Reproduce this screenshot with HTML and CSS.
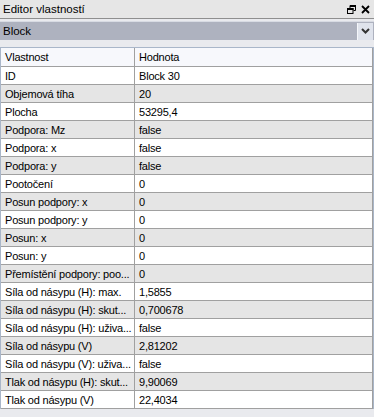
FILE: index.html
```html
<!DOCTYPE html>
<html>
<head>
<meta charset="utf-8">
<link rel="stylesheet" href="styles.css">
</head>
<body>
<div class="panel">
  <div class="titlebar">
    <span class="title">Editor vlastností</span>
    <span class="tools">
      <svg class="ico" width="9" height="9" viewBox="0 0 9 9"><path d="M3 0.5h5.5v5h-2M3 0.5v2.5" fill="none" stroke="#000" stroke-width="1"/><rect x="3" y="0" width="6" height="2" fill="#000"/><rect x="0.5" y="3.5" width="5.5" height="5" fill="none" stroke="#000"/><rect x="0" y="3" width="6.5" height="2" fill="#000"/></svg>
      <svg class="ico" width="9" height="9" viewBox="0 0 9 9"><path d="M1 1L8 8M8 1L1 8" stroke="#000" stroke-width="1.8"/></svg>
    </span>
  </div>
  <div class="combo">
    <span class="combo-text">Block</span>
    <span class="combo-btn"><svg width="9" height="6" viewBox="0 0 9 6"><path d="M1 1L4.5 4.5L8 1" fill="none" stroke="#333" stroke-width="2"/></svg></span>
  </div>
  <div class="grid">
    <div class="row head"><div class="c1">Vlastnost</div><div class="c2">Hodnota</div></div>
    <div class="row"><div class="c1">ID</div><div class="c2">Block 30</div></div>
    <div class="row alt"><div class="c1">Objemová tíha</div><div class="c2">20</div></div>
    <div class="row"><div class="c1">Plocha</div><div class="c2">53295,4</div></div>
    <div class="row alt"><div class="c1">Podpora: Mz</div><div class="c2">false</div></div>
    <div class="row"><div class="c1">Podpora: x</div><div class="c2">false</div></div>
    <div class="row alt"><div class="c1">Podpora: y</div><div class="c2">false</div></div>
    <div class="row"><div class="c1">Pootočení</div><div class="c2">0</div></div>
    <div class="row alt"><div class="c1">Posun podpory: x</div><div class="c2">0</div></div>
    <div class="row"><div class="c1">Posun podpory: y</div><div class="c2">0</div></div>
    <div class="row alt"><div class="c1">Posun: x</div><div class="c2">0</div></div>
    <div class="row"><div class="c1">Posun: y</div><div class="c2">0</div></div>
    <div class="row alt"><div class="c1">Přemístění podpory: poo...</div><div class="c2">0</div></div>
    <div class="row"><div class="c1">Síla od násypu (H): max.</div><div class="c2">1,5855</div></div>
    <div class="row alt"><div class="c1">Síla od násypu (H): skut...</div><div class="c2">0,700678</div></div>
    <div class="row"><div class="c1">Síla od násypu (H): uživa...</div><div class="c2">false</div></div>
    <div class="row alt"><div class="c1">Síla od násypu (V)</div><div class="c2">2,81202</div></div>
    <div class="row"><div class="c1">Síla od násypu (V): uživa...</div><div class="c2">false</div></div>
    <div class="row alt"><div class="c1">Tlak od násypu (H): skut...</div><div class="c2">9,90069</div></div>
    <div class="row"><div class="c1">Tlak od násypu (V)</div><div class="c2">22,4034</div></div>
  </div>
</div>
</body>
</html>
```
FILE: styles.css
```css
html, body {
  margin: 0;
  padding: 0;
}
body {
  background: #e9eaee;
  font-family: "Liberation Sans", Arial, sans-serif;
  font-size: 11px;
  color: #000;
}
.panel {
  width: 374px;
  height: 417px;
  background: #e9eaee;
  overflow: hidden;
}
.titlebar {
  height: 18px;
  display: flex;
  align-items: center;
  justify-content: space-between;
  background: #e6e6e6;
  border-bottom: 1px solid #8f8f8f;
  padding: 0 4px 0 3px;
}
.title {
  font-size: 11.5px;
}
.tools {
  display: flex;
  gap: 5px;
  align-items: center;
}
.ico {
  display: block;
}
.combo {
  margin-top: 2px;
  height: 19px;
  display: flex;
  align-items: center;
  justify-content: space-between;
  background: #aeb2bf;
  border-top: 1px solid #d8dbe3;
  box-sizing: border-box;
  padding-left: 3px;
}
.combo-text {
  font-size: 11.5px;
}
.combo-btn {
  width: 15px;
  height: 17px;
  background: #dfe3ec;
  border-left: 1px solid #f4f6fa;
  display: flex;
  align-items: center;
  justify-content: center;
  margin-right: 1px;
}
.grid {
  margin-top: 7px;
  width: 372px;
  border: 1px solid #a9b6c9;
  border-bottom: none;
  background: #fff;
}
.row {
  display: grid;
  grid-template-columns: 134px 1fr;
  height: 18px;
  box-sizing: border-box;
  border-bottom: 1px solid #a0a0a0;
  border-right: 1px solid #a0a0a0;
  background: #fff;
}
.row.alt {
  background: #e5e5e5;
}
.row.head {
  height: 19px;
  background: #f7f8fc;
}
.c1, .c2 {
  display: flex;
  align-items: center;
  white-space: nowrap;
  overflow: hidden;
  letter-spacing: -0.2px;
}
.c1 {
  padding-left: 4px;
  border-right: 1px solid #a0a0a0;
}
.c2 {
  padding-left: 4px;
}
```
